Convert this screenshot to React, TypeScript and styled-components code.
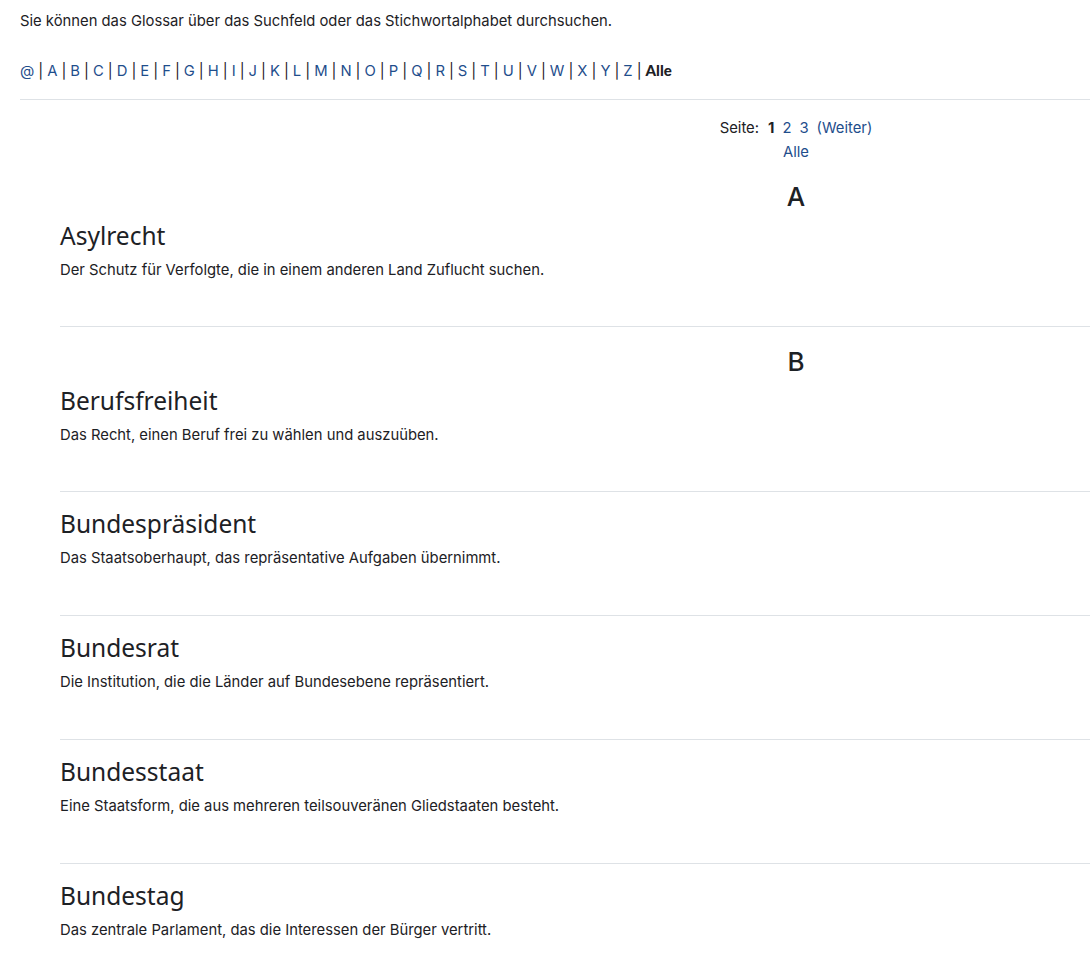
import React from "react";
import styled, { createGlobalStyle } from "styled-components";

const Global = createGlobalStyle`
  html, body { margin: 0; padding: 0; background: #fff; overflow-x: hidden; }
  body { font-family: Inter, "Open Sans", "Liberation Sans", sans-serif; color: #1d2125; font-size: 14.8px; }
`;

const Page = styled.div`
  width: 1552px;
  padding: 11px 0 0 20px;
`;

const Intro = styled.p`
  margin: 0;
  line-height: 20px;
`;

const AlphaNav = styled.nav`
  margin-top: 29px;
  line-height: 20px;
  padding-bottom: 18px;
  border-bottom: 1px solid #dee2e6;
`;

const Letter = styled.a`
  color: #1f4e8c;
  text-decoration: none;
`;

const Sep = styled.span`
  color: #1d2125;
  margin: 0 4px;
`;

const Current = styled.b`
  font-family: "Lato", sans-serif;
  font-weight: 900;
  font-size: 15px;
`;

const Paging = styled.div`
  text-align: center;
  margin-top: 16px;
  line-height: 24px;
`;

const PageLink = styled.a`
  color: #1f4e8c;
  text-decoration: none;
  margin-left: 8px;
`;

const PageCur = styled.b`
  margin-left: 9px;
  font-weight: 700;
`;

const LetterHead = styled.h2`
  margin: 0;
  text-align: center;
  font-family: Inter, "Liberation Sans", sans-serif;
  font-weight: 500;
  font-size: 26px;
  line-height: 32px;
`;

const Section = styled.section<{ $first?: boolean }>`
  padding-top: ${(p) => (p.$first ? "17px" : "19px")};
`;

const Entry = styled.div<{ $afterLetter?: boolean }>`
  margin-left: 40px;
  padding-top: ${(p) => (p.$afterLetter ? "7px" : "16px")};
  padding-bottom: ${(p) => (p.$afterLetter ? "46px" : "47px")};
  border-bottom: 1px solid #dee2e6;
`;

const Term = styled.h3`
  margin: 0;
  font-family: "Noto Sans", Lato, sans-serif;
  font-weight: 400;
  font-size: 24.5px;
  line-height: 32px;
  color: #1d2125;
`;

const Def = styled.p`
  margin: 8px 0 0;
  line-height: 20px;
`;

const letters = "ABCDEFGHIJKLMNOPQRSTUVWXYZ".split("");

const groups: { letter: string; items: [string, string][] }[] = [
  { letter: "A", items: [["Asylrecht", "Der Schutz für Verfolgte, die in einem anderen Land Zuflucht suchen."]] },
  {
    letter: "B",
    items: [
      ["Berufsfreiheit", "Das Recht, einen Beruf frei zu wählen und auszuüben."],
      ["Bundespräsident", "Das Staatsoberhaupt, das repräsentative Aufgaben übernimmt."],
      ["Bundesrat", "Die Institution, die die Länder auf Bundesebene repräsentiert."],
      ["Bundesstaat", "Eine Staatsform, die aus mehreren teilsouveränen Gliedstaaten besteht."],
      ["Bundestag", "Das zentrale Parlament, das die Interessen der Bürger vertritt."],
    ],
  },
];

export default function App() {
  return (
    <>
      <Global />
      <Page>
        <Intro>Sie können das Glossar über das Suchfeld oder das Stichwortalphabet durchsuchen.</Intro>
        <AlphaNav>
          <Letter href="#">@</Letter>
          {letters.map((l) => (
            <React.Fragment key={l}>
              <Sep>|</Sep>
              <Letter href="#">{l}</Letter>
            </React.Fragment>
          ))}
          <Sep>|</Sep>
          <Current>Alle</Current>
        </AlphaNav>
        <Paging>
          <div>
            Seite:<PageCur>1</PageCur>
            <PageLink href="#">2</PageLink>
            <PageLink href="#">3</PageLink>
            <PageLink href="#">(Weiter)</PageLink>
          </div>
          <div>
            <Letter href="#">Alle</Letter>
          </div>
        </Paging>
        {groups.map((g, gi) => (
          <Section key={g.letter} $first={gi === 0}>
            <LetterHead>{g.letter}</LetterHead>
            {g.items.map(([t, d], i) => (
              <Entry key={t} $afterLetter={i === 0}>
                <Term>{t}</Term>
                <Def>{d}</Def>
              </Entry>
            ))}
          </Section>
        ))}
      </Page>
    </>
  );
}
